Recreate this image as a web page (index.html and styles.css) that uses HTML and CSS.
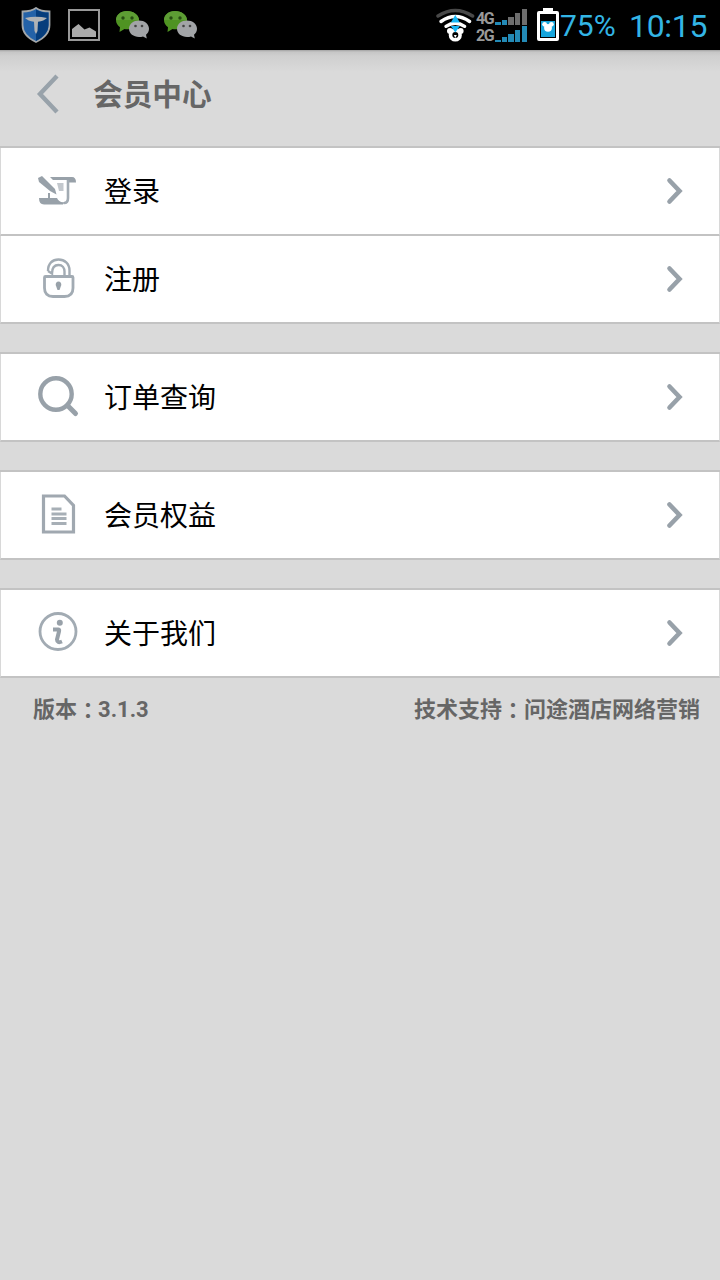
FILE: index.html
```html
<!doctype html>
<html lang="zh-CN">
<head>
    <meta charset="UTF-8">
    <meta name="viewport" content="width=device-width, initial-scale=1">
    <title>会员中心</title>
    <link rel="stylesheet" href="styles.css">
</head>
<body>
<!-- 图标 -->
<svg class="defs" width="0" height="0">
    <symbol id="wechat" viewBox="0 0 34 30">
        <path d="M12 1C5.500 1 1 5 1 10c0 3 1.500 5.500 4 7.200L4.500 22l5-3c1.500.3 3.500.4 5.500 0C20 18.500 24 15 24 10.500 24 5 18.500 1 12 1z" fill="#4f9322"/>
        <path d="M12 1C5.500 1 1 5 1 10h23C24 5 18.500 1 12 1z" fill="#5d9d34"/>
        <circle cx="8" cy="8" r="1.700" fill="#264d12"/>
        <circle cx="17" cy="8" r="1.700" fill="#264d12"/>
        <path d="M24 10.500c-5.500 0-10 3.500-10 8.300s4.500 8.200 10 8.200c1.500 0 2.800-.2 4-.6l3.800 2-.8-3.600c1.800-1.500 3-3.500 3-6 0-4.800-4.500-8.300-10-8.300z" fill="#a2a4a7"/>
        <circle cx="20.500" cy="16" r="1.300" fill="#444"/>
        <circle cx="27" cy="16" r="1.300" fill="#444"/>
    </symbol>
    <symbol id="arrow" viewBox="0 0 18 28">
        <path d="M3.500 3.500L13.500 14l-10 10.500" fill="none" stroke="#98a1a9" stroke-width="4.600" stroke-linecap="round"/>
    </symbol>
</svg>

<div class="statusbar">
    <div class="notices">
        <svg class="shield" width="30" height="36" viewBox="0 0 30 36">
            <path d="M15 1c4 3 8.500 3.500 13.500 3.500V18c0 8-6 13.500-13.500 17C7.500 31.500 1.500 26 1.500 18V4.500C6.500 4.500 11 4 15 1z" fill="#2462a8" stroke="#a3a7aa" stroke-width="1.800"/>
            <path d="M15 2.500c4 2.500 8 3 12.500 3V18c0 7-5.500 12.500-12.500 16z" fill="#063d7c"/>
            <path d="M4 11q11-2.500 22 0c-2 2-5 3.300-9 3.700L16.500 24 15 27l-1.500-3L13 14.700C9 14.300 6 13 4 11z" fill="#b1b3b5"/>
        </svg>
        <svg class="photo" width="32" height="32" viewBox="0 0 32 32">
            <rect x="1" y="1" width="30" height="30" fill="none" stroke="#999" stroke-width="2"/>
            <path d="M4 28v-8l6.500-5 6 5.500 5-2 6.500 4V28z" fill="#aaa"/>
        </svg>
        <svg class="wechat" width="34" height="30"><use href="#wechat"/></svg>
        <svg class="wechat" width="34" height="30"><use href="#wechat"/></svg>
    </div>
    <div class="system">
        <svg class="wifi" width="40" height="36" viewBox="0 0 40 36">
            <g fill="none" stroke-linecap="round">
                <path d="M2 9Q19.300-2 36.600 9" stroke="#484848" stroke-width="3.400"/>
                <path d="M5 14.500Q19.300 4.500 33.600 14.500" stroke="#fff" stroke-width="3.400"/>
                <path d="M10 19.300Q19.300 13 28.600 19.300" stroke="#fff" stroke-width="3.400"/>
            </g>
            <circle cx="14" cy="24" r="3" fill="#fff"/>
            <circle cx="24.600" cy="24" r="3" fill="#fff"/>
            <circle cx="19.300" cy="28" r="4.800" fill="#000" stroke="#fff" stroke-width="3.600"/>
            <path d="M17.800 28h3l-1.500 3z" fill="#fff"/>
            <path d="M19.300 8l4.500 7.500h-9zM14.800 19h9l-4.500 6.500z" fill="#16b5f4"/>
        </svg>
        <div class="signals">
            <div class="signal">
                <span>4G</span>
                <svg width="32" height="16" viewBox="0 0 32 16">
                    <path d="M0 13h6v3H0zM7 11h5v5H7z" fill="#238ab6"/>
                    <path d="M13 8h6v8h-6zM20 4h5v12h-5zM27 0h5v16h-5z" fill="#6d6d6d"/>
                </svg>
            </div>
            <div class="signal">
                <span>2G</span>
                <svg width="32" height="16" viewBox="0 0 32 16">
                    <path d="M0 14h6v2H0zM7 11h5v5H7zM13 8h6v8h-6zM20 4h5v12h-5zM27 0h5v16h-5z" fill="#238ab6"/>
                </svg>
            </div>
        </div>
        <svg class="battery" width="22" height="34" viewBox="0 0 22 34">
            <path d="M6 0h10v3h4q2 0 2 2v26q0 2-2 2H2q-2 0-2-2V5q0-2 2-2h4z" fill="#fff"/>
            <path d="M3 6h16v24H3z" fill="#000"/>
            <path d="M4 13h14v16H4z" fill="#16a5dc"/>
            <circle cx="7.600" cy="16.300" r="2.400" fill="#fff"/>
            <circle cx="14.400" cy="16.300" r="2.400" fill="#fff"/>
            <circle cx="11" cy="19.800" r="3.900" fill="#fff"/>
        </svg>
        <span class="percent">75%</span>
        <span class="time">10:15</span>
    </div>
</div>

<div class="header">
    <svg width="24" height="42" viewBox="0 0 24 42">
        <path d="M21 3L4 21l17 18" fill="none" stroke="#98a2aa" stroke-width="4.400"/>
    </svg>
    <h1>会员中心</h1>
</div>

<div class="menu">
    <div class="group">
        <a class="row">
            <svg class="icon" width="44" height="44" viewBox="0 0 44 44">
                <path d="M14 8h22q4 0 4 5.500h-7v-2.500H17z" fill="#98a1a9"/>
                <path d="M32 11v18q0 5-4 5" fill="none" stroke="#a2abb3" stroke-width="2.600"/>
                <path d="M3 29h18q2 5 8 4l-2 2.500H8q-5 0-5-6.500z" fill="#98a1a9"/>
                <path d="M2 9l4-2 13 13 1.500 5.500L14 22 3 13z" fill="#98a1a9"/>
                <path d="M13 29v-5" fill="none" stroke="#98a1a9" stroke-width="2"/>
                <path d="M21 14h6.500v8H23z" fill="#c3c8cd"/>
            </svg>
            <span>登录</span>
            <svg class="arrow" width="18" height="28"><use href="#arrow"/></svg>
        </a>
        <a class="row">
            <svg class="icon" width="44" height="44" viewBox="0 0 44 44">
                <g fill="none" stroke="#a2abb3">
                    <path d="M9.500 19.500h26.500q1 0 1 1V31q0 8.500-8.500 8.500H17q-8.500 0-8.500-8.500V20.500q0-1 1-1z" stroke-width="2.800"/>
                    <path d="M12 14C12 6.500 16.500 2.500 22.500 2.500S33.500 6.500 33.500 13.500v6M12 14l4 2.500C16 10.500 18.500 8 22.500 8s6 3 6 6.500v5" stroke-width="2.400"/>
                </g>
                <path d="M22.500 24.500q2.800 0 2.800 3.500l-1.800 5h-2l-1.800-5q0-3.500 2.800-3.500z" fill="#98a1a9"/>
            </svg>
            <span>注册</span>
            <svg class="arrow" width="18" height="28"><use href="#arrow"/></svg>
        </a>
    </div>
    <div class="group">
        <a class="row">
            <svg class="icon" width="44" height="44" viewBox="0 0 44 44">
                <circle cx="20" cy="19" r="15.700" fill="none" stroke="#98a1a9" stroke-width="4.400"/>
                <path d="M31.500 30.500l8 8" stroke="#98a1a9" stroke-width="5" stroke-linecap="round"/>
            </svg>
            <span>订单查询</span>
            <svg class="arrow" width="18" height="28"><use href="#arrow"/></svg>
        </a>
    </div>
    <div class="group">
        <a class="row">
            <svg class="icon" width="44" height="44" viewBox="0 0 44 44">
                <path d="M7.500 3h21l9 9.500v26.500h-30z" fill="none" stroke="#a0a8b0" stroke-width="3.200"/>
                <path d="M15.500 16h10M15.500 21h15M15.500 25.500h15M15.500 30.500h15" stroke="#a7afb6" stroke-width="2.800"/>
            </svg>
            <span>会员权益</span>
            <svg class="arrow" width="18" height="28"><use href="#arrow"/></svg>
        </a>
    </div>
    <div class="group">
        <a class="row">
            <svg class="icon" width="44" height="44" viewBox="0 0 44 44">
                <circle cx="22" cy="20.500" r="18" fill="none" stroke="#a2abb3" stroke-width="2.800"/>
                <circle cx="23.800" cy="11.800" r="3" fill="#98a1a9"/>
                <path d="M17 18.500h5.500q1 0 .5 2l-2 8q0 4 5 2" fill="none" stroke="#98a1a9" stroke-width="4"/>
            </svg>
            <span>关于我们</span>
            <svg class="arrow" width="18" height="28"><use href="#arrow"/></svg>
        </a>
    </div>
</div>

<div class="footer">
    <span>版本<i class="colon" lang="zh-TW">：</i>3.1.3</span>
    <span>技术支持<i class="colon" lang="zh-TW">：</i>问途酒店网络营销</span>
</div>
</body>
</html>
```

FILE: styles.css
```css
* {
    box-sizing: border-box;
}
body {
    margin: 0;
    min-height: 100vh;
    background: #dadada;
    font-family: Roboto, "Noto Sans CJK SC", sans-serif;
    color: #000;
}
svg {
    display: block;
    flex: none;
}
.defs {
    position: absolute;
}
.statusbar {
    height: 50px;
    padding: 0 13px 0 21px;
    background: #000;
    display: flex;
    justify-content: space-between;
}
.notices {
    display: flex;
    align-items: center;
}
.photo {
    margin: 0 15px 0 17px;
}
.wechat {
    margin-right: 14px;
}
.system {
    display: flex;
    align-items: center;
    color: #33b5e5;
    line-height: 50px;
}
.signals {
    display: flex;
    flex-direction: column;
    gap: 1px;
}
.signal {
    display: flex;
    align-items: flex-end;
    height: 16px;
}
.signal span {
    width: 19px;
    font-size: 16px;
    font-weight: bold;
    line-height: 13px;
    letter-spacing: -1.5px;
    color: #999;
}
.battery {
    margin: 0 1px 0 10px;
}
.percent {
    width: 69px;
    padding-top: 2px;
    font-size: 30px;
}
.time {
    width: 78px;
    font-size: 32px;
    letter-spacing: -0.3px;
    padding-top: 2px;
}
.header {
    height: 96px;
    padding: 0 0 8px 36px;
    display: flex;
    align-items: center;
    background: linear-gradient(#a2a2a2 0, #c6c6c6 2px, #cfcfcf 6px, #dadada 22px);
}
.header h1 {
    margin: 2px 0 0 33px;
    font-size: 29.7px;
    font-weight: bold;
    line-height: 40px;
    color: #666;
}
.menu {
    display: flex;
    flex-direction: column;
    gap: 28px;
}
.group {
    border-top: 2px solid #c3c3c3;
}
.row {
    height: 88px;
    padding: 0 35px;
    display: flex;
    align-items: center;
    background: #fff;
    border: 1px solid #d8d8d8;
    border-width: 0 1px;
    border-bottom: 2px solid #c3c3c3;
}
.icon {
    margin-bottom: 1px;
}
.row span {
    flex: 1;
    margin: 0 0 2px 24px;
    font-size: 28px;
}
.footer {
    display: flex;
    justify-content: space-between;
    padding: 13px 20px 0 33px;
    font-size: 22px;
    font-weight: bold;
    line-height: 32px;
    color: #666;
}
/* 冒号居中显示 */
.colon {
    font-family: "Noto Sans CJK TC", sans-serif;
    font-style: normal;
    margin-right: -1px;
    position: relative;
    top: 1px;
}
.footer span:last-child .colon {
    margin-right: 0;
}
```
